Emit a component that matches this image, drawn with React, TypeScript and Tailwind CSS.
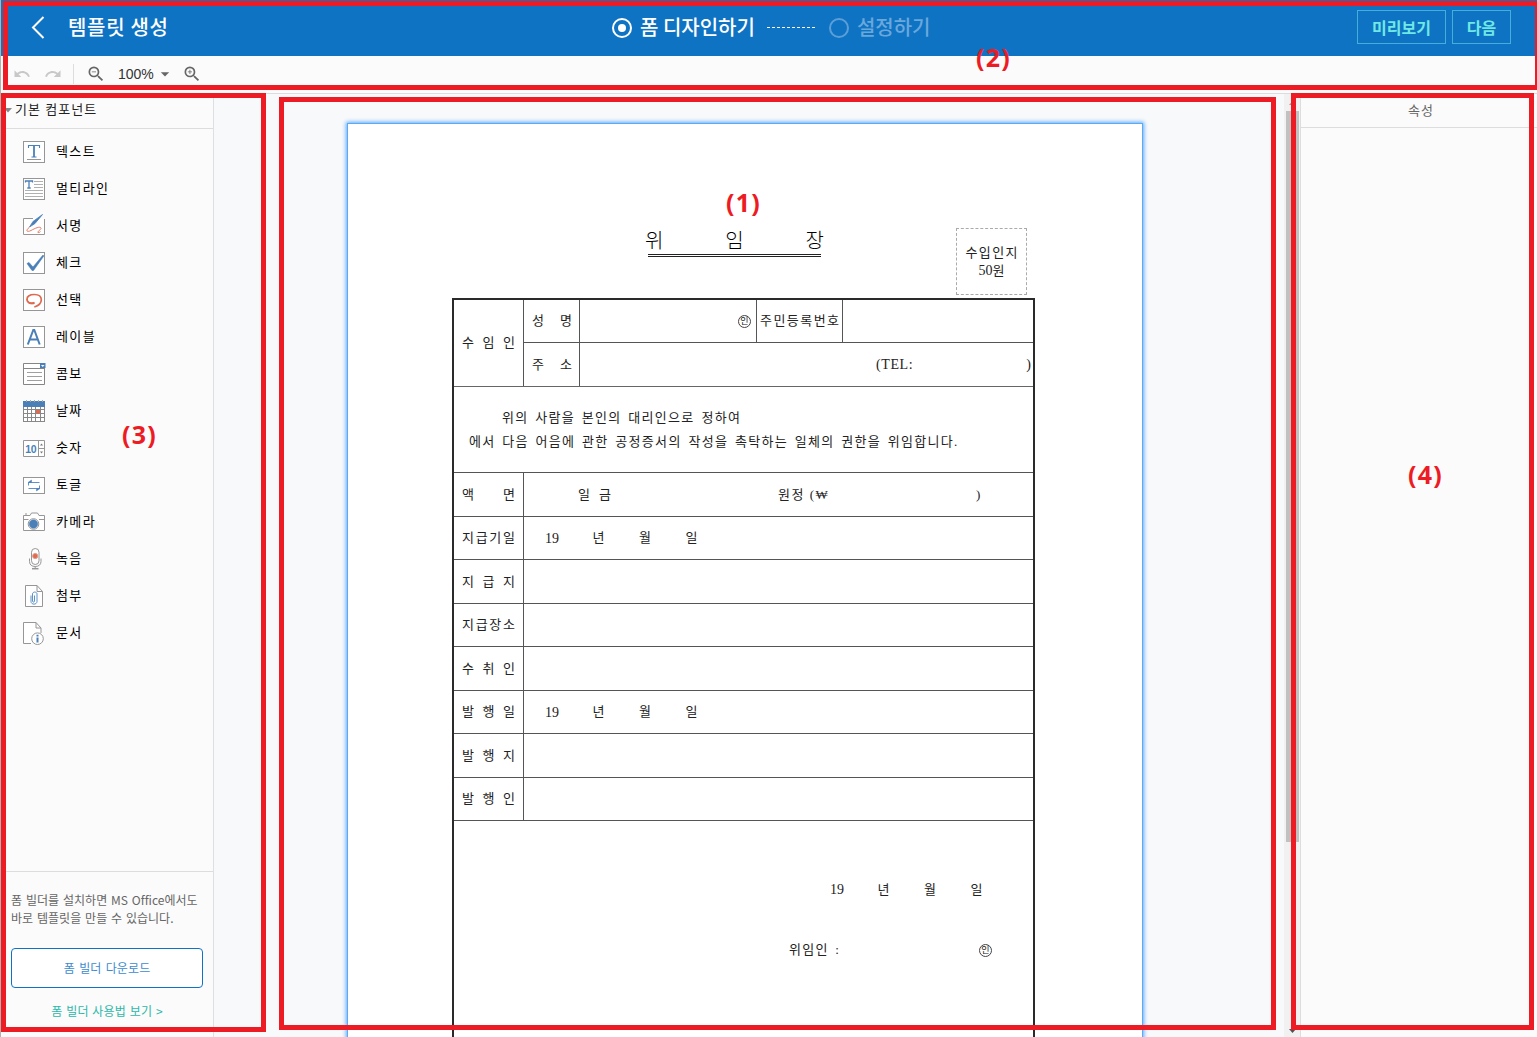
import React from "react";
import { MdArrowDropDown, MdRedo, MdUndo, MdZoomIn, MdZoomOut } from "react-icons/md";

const GRAY = "#969696";
const BLUE = "#4a7fb8";
const RED = "#dd6b52";

function Icon({ children }: { children: React.ReactNode }) {
  return (
    <svg width="24" height="24" viewBox="0 0 24 24" fill="none" stroke={GRAY} strokeWidth="1" className="shrink-0">
      {children}
    </svg>
  );
}

const frame = <rect x="1.5" y="1.5" width="21" height="21" fill="#fff" />;

const components: { label: string; icon: React.ReactNode }[] = [
  {
    label: "텍스트",
    icon: (
      <>
        {frame}
        <path d="M6.500 8V5.500h11V8M9.500 17h5" stroke={BLUE} strokeWidth="1.100" />
        <path d="M12 5v12" stroke={BLUE} strokeWidth="1.800" />
        <path d="M5 19.500h14" />
      </>
    ),
  },
  {
    label: "멀티라인",
    icon: (
      <>
        {frame}
        <path d="M3.500 5.500V4h7v1.500M7 4v7M5.300 11h3.400" stroke={BLUE} strokeWidth="1.300" />
        <path d="M12 4.500h9M12 7.500h9M12 10.500h9M3 13.500h18M3 16.500h18M3 19.500h18" stroke="#b0b0b0" />
      </>
    ),
  },
  {
    label: "서명",
    icon: (
      <>
        <path d="M11 4.500H1.500v16h21V5" fill="#fff" />
        <path d="M20.500.500 11 7.500 7.500 13 13 9.500Z" fill={BLUE} stroke={BLUE} strokeWidth=".8" />
        <path d="M7.500 13C3 17 5 18.500 9 16.500c4-2.200 9-4.500 10-2.500.7 1.500-4.500 3.800-3 4.500 1 .3 2-.5 2.500-1" stroke={RED} strokeWidth=".9" />
      </>
    ),
  },
  {
    label: "체크",
    icon: (
      <>
        {frame}
        <path d="M5 12.500 7 11.500l4 4.500L21 4l.8 1L11.500 19.500H10Z" fill={BLUE} stroke={BLUE} strokeWidth=".6" />
      </>
    ),
  },
  {
    label: "선택",
    icon: (
      <>
        {frame}
        <path
          d="M12.500 14.500C8 16.500 5 14 5 11.200 5 8 8 6.500 12.300 6.500c4.200 0 7 1.800 7 5.200 0 3.500-2.800 6-7 7.300"
          stroke={RED}
          strokeWidth="1.700"
        />
        <path d="M5 11c0 3 3 4.500 7 3.500l.3 1.200C8 17 4.500 14.500 5 11Z" fill={RED} stroke={RED} strokeWidth=".7" />
      </>
    ),
  },
  {
    label: "레이블",
    icon: (
      <>
        {frame}
        <path d="M5.800 19.500 11.300 5h1L17.700 19.500M7.800 14.500h8" stroke={BLUE} strokeWidth="2" />
      </>
    ),
  },
  {
    label: "콤보",
    icon: (
      <>
        <path d="M1.500 1.500h21v21h-21ZM1.500 6.500h21" fill="#fff" stroke="#858585" />
        <rect x="18" y="1" width="5.500" height="5" fill={BLUE} stroke="none" />
        <path d="M19 3h3.500l-1.750 2Z" fill="#fff" stroke="none" />
        <path d="M5 10.500h15M5 14.500h15M5 18.500h15" stroke="#a0a0a0" />
      </>
    ),
  },
  {
    label: "날짜",
    icon: (
      <>
        <rect x="1.500" y="6.500" width="21" height="16" fill="#fff" stroke="#888" />
        <path d="M1.500 10.500h21M1.500 14.500h21M1.500 18.500h21M5.500 8v14M9.500 8v14M13.500 8v14M18.500 8v14" stroke="#888" />
        <rect x="1" y="2" width="22" height="6" fill={BLUE} stroke="none" />
        <path d="M4.500 1v2M8.500 1v2M12.500 1v2M16.500 1v2M20.500 1v2" stroke="#aaa" />
        <rect x="14" y="11" width="4" height="3.500" fill={RED} stroke="none" />
      </>
    ),
  },
  {
    label: "숫자",
    icon: (
      <>
        <path d="M1.500 4.500h21v16h-21ZM16.500 4.500v16M16.500 12.500h6" fill="#fff" />
        <path d="M18 9.500l1.500-2 1.500 2ZM18 15.500l1.500 2 1.500-2Z" fill="#777" stroke="none" />
        <text x="3.200" y="17" fontSize="10.500" fontWeight="700" fill={BLUE} stroke="none" fontFamily="Liberation Sans, sans-serif" textLength="11.500">
          10
        </text>
      </>
    ),
  },
  {
    label: "토글",
    icon: (
      <>
        <rect x="1.500" y="4.500" width="21" height="16" fill="#fff" />
        <path d="M17.500 9.500H6.500v3M6.500 15.500h11v-3" stroke="#5d93c8" />
        <path d="M6 9.500 9.500 7v2.500ZM18 15.500 14.500 18v-2.500Z" fill={BLUE} stroke={BLUE} strokeWidth=".5" />
      </>
    ),
  },
  {
    label: "카메라",
    icon: (
      <>
        <path d="M1.500 5.500H8l1.500-2.500h6L17 5.500h5.500v15h-21ZM1.500 9.500h5M17 9.500h5.500M3 4h2" fill="#fff" />
        <circle cx="11.500" cy="14" r="5.300" fill="#fff" />
        <circle cx="11.500" cy="14" r="4.200" fill={BLUE} stroke={BLUE} strokeWidth=".6" />
      </>
    ),
  },
  {
    label: "녹음",
    icon: (
      <>
        <rect x="9.500" y="1.500" width="7.500" height="16" rx="3.750" fill="#fff" />
        <path d="M7.500 11.500v3c0 3.500 2.500 5 5.700 5s5.800-1.500 5.800-5v-3M13.200 19.500v2" />
        <path d="M10 21.700h6.500" strokeWidth="1.500" />
        <circle cx="13.200" cy="9" r="2.600" fill={RED} stroke="#e59a88" />
      </>
    ),
  },
  {
    label: "첨부",
    icon: (
      <>
        <path d="M3.500 1.500H15l5.500 6v15h-17ZM15 1.500v6h5.500" fill="#fff" />
        <path d="M12.500 11.500v5.500c0 1.500-2 1.500-2 0V10c0-2.600 4.500-2.600 4.500 0v7.500c0 3.500-6 3.500-6 0v-6" stroke="#5d93c8" />
      </>
    ),
  },
  {
    label: "문서",
    icon: (
      <>
        <path d="M9 22.500H1.500v-21H14l5 5.500v5M14 1.500v5.500h5" fill="#fff" />
        <circle cx="15.500" cy="17.700" r="5.800" fill="#fff" />
        <path d="M15.500 16.500v5M15.500 13.800v1.600" stroke={BLUE} strokeWidth="2" />
      </>
    ),
  },
];

/** Characters distributed evenly over a fixed width. */
function Spread({ text, className = "" }: { text: string; className?: string }) {
  return (
    <span className={"flex shrink-0 justify-between " + className}>
      {text.split("").map((c, i) => (
        <span key={i}>{c}</span>
      ))}
    </span>
  );
}

/** Seal mark: a small syllable inside a circle. */
function Seal() {
  return (
    <span className="flex size-[13px] shrink-0 items-center justify-center rounded-full border border-[#444] text-[9px] leading-none tracking-normal">
      <span>인</span>
    </span>
  );
}

function DateLine() {
  return (
    <>
      <span className="w-[47.500px] text-[14px]">19</span>
      <span className="w-[46.500px]">년</span>
      <span className="w-[46.500px]">월</span>
      <span>일</span>
    </>
  );
}

const rows: { label: string; kind?: "amount" | "date"; height: string }[] = [
  { label: "액면", kind: "amount", height: "h-[44px]" },
  { label: "지급기일", kind: "date", height: "h-[43px]" },
  { label: "지급지", height: "h-[44px]" },
  { label: "지급장소", height: "h-[43px]" },
  { label: "수취인", height: "h-[44px]" },
  { label: "발행일", kind: "date", height: "h-[43px]" },
  { label: "발행지", height: "h-[44px]" },
  { label: "발행인", height: "h-[43px]" },
];

function FormTable() {
  return (
    <div className="ml-[104px] h-[760px] w-[583px] border-2 border-[#2a2a2a]">
      <div className="flex h-[87px] border-b border-[#666]">
        <div className="flex w-[70px] items-center border-r border-[#555] pl-[8px]">
          <Spread text="수임인" className="w-[53px]" />
        </div>
        <div className="flex-1">
          <div className="flex h-[43px] border-b border-[#555]">
            <div className="flex w-[56px] items-center border-r border-[#555] pl-[8px]">
              <Spread text="성명" className="w-[40px]" />
            </div>
            <div className="flex w-[177px] items-center justify-end border-r border-[#555] pr-[5px]">
              <Seal />
            </div>
            <div className="flex w-[86px] items-center border-r border-[#555] pl-[3px]">
              <Spread text="주민등록번호" className="w-[79px]" />
            </div>
          </div>
          <div className="flex h-[43px]">
            <div className="flex w-[56px] items-center border-r border-[#555] pl-[8px]">
              <Spread text="주소" className="w-[40px]" />
            </div>
            <div className="flex flex-1 items-center justify-between pr-[2px] pl-[296px] text-[14px]">
              <span className="tracking-[0.6px]">(TEL:</span>
              <span>)</span>
            </div>
          </div>
        </div>
      </div>
      <div className="h-[86px] border-b border-[#555] pt-[19px] leading-[24px] tracking-[1.300px] whitespace-pre [word-spacing:2.200px]">
        <div className="pl-[48px]">위의 사람을 본인의 대리인으로 정하여</div>
        <div className="pl-[15px]">에서 다음 어음에 관한 공정증서의 작성을 촉탁하는 일체의 권한을 위임합니다.</div>
      </div>
      {rows.map((r) => (
        <div key={r.label} className={"flex border-b border-[#555] " + r.height}>
          <div className="flex w-[70px] items-center border-r border-[#555] pl-[8px]">
            <Spread text={r.label} className="w-[53px]" />
          </div>
          {r.kind === "amount" && (
            <div className="flex flex-1 items-center">
              <Spread text="일금" className="ml-[54px] w-[33px]" />
              <span className="ml-[167px] w-[198px] tracking-[1.500px] whitespace-pre">원정 (₩</span>
              <span>)</span>
            </div>
          )}
          {r.kind === "date" && (
            <div className="flex flex-1 items-center pl-[21px]">
              <DateLine />
            </div>
          )}
        </div>
      ))}
      <div className="flex h-[18px] pt-[60px] pl-[376px] leading-[18px]">
        <DateLine />
      </div>
      <div className="flex items-center pt-[60px] pl-[335px] leading-[18px]">
        <span className="w-[190px] tracking-[1.300px] whitespace-pre [word-spacing:2px]">위임인 :</span>
        <Seal />
      </div>
    </div>
  );
}

function Paper() {
  return (
    <div className="mt-[29px] ml-[133px] h-[1000px] w-[796px] shrink-0 border border-[#5aaafa] bg-white font-['Liberation_Serif','Noto_Sans_CJK_KR',serif] text-[13px] text-[#222] shadow-[0_0_4px_1px_#5aaafa]">
      <div className="flex h-[174px] pl-[297px]">
        <div className="mt-[104px] w-[179px]">
          <Spread text="위임장" className="h-[26px] text-[20px] leading-[26px] font-light text-black" />
          <div className="ml-[3px] w-[173px] border-t-[3px] border-double border-[#222]" />
        </div>
        <div className="mt-[104px] ml-[132px] flex h-[67px] w-[71px] flex-col items-center border border-dashed border-[#aaa] pt-[15px] leading-[18px]">
          <Spread text="수입인지" className="w-[52px]" />
          <span>
            <span className="text-[14px]">50</span>원
          </span>
        </div>
      </div>
      <FormTable />
    </div>
  );
}

function Header() {
  return (
    <header className="flex h-[56px] shrink-0 bg-[#0f73c4] text-[20px] font-medium text-white">
      <div className="flex w-[611px] items-center pb-[2px] pl-[28px]">
        <svg width="16" height="24" viewBox="0 0 16 24" fill="none" stroke="#fff" strokeWidth="2">
          <path d="M14.500 2 4 12.500 14.500 23" />
        </svg>
        <span className="ml-[23px] tracking-[0.7px]">템플릿 생성</span>
      </div>
      <div className="flex flex-1 items-center">
        <span className="flex size-[20px] items-center justify-center rounded-full border-2 border-white">
          <span className="size-[8px] rounded-full bg-white" />
        </span>
        <span className="ml-[8px] pb-[2px]">폼 디자인하기</span>
        <svg width="51" height="2" className="mb-px ml-[12px]">
          <path d="M0 .500h50" stroke="#fff" strokeWidth="1" strokeDasharray="3 2" shapeRendering="crispEdges" />
        </svg>
        <span className="ml-[11px] size-[20px] rounded-full border-2 border-[#5c9fd8]" />
        <span className="ml-[8px] pb-[2px] text-[#6aa8dc]">설정하기</span>
      </div>
      <div className="flex gap-[6px] pt-[10px] pr-[26px] text-[16px] font-bold text-[#6fe8e4]">
        <button className="h-[34px] w-[89px] border border-[#45aedb]">미리보기</button>
        <button className="h-[34px] w-[59px] border border-[#45aedb]">다음</button>
      </div>
    </header>
  );
}

function Toolbar() {
  return (
    <div className="flex h-[38px] shrink-0 items-center border-b border-[#dcdcdc] bg-[#fbfbfb] pb-px pl-[12px] text-[#666]">
      <MdUndo size={18} color="#c8c8c8" />
      <MdRedo size={18} color="#c8c8c8" className="ml-[13px]" />
      <span className="ml-[11px] h-[20px] w-px bg-[#ddd]" />
      <MdZoomOut size={20} className="ml-[12px]" />
      <span className="ml-[12px] font-['Liberation_Sans',sans-serif] text-[14px] text-[#333]">100%</span>
      <MdArrowDropDown size={20} className="ml-[1px]" />
      <MdZoomIn size={20} className="ml-[7px]" />
    </div>
  );
}

function Sidebar() {
  return (
    <aside className="flex w-[213px] shrink-0 flex-col border-r border-[#dde0e3] bg-[#fbfbfb]">
      <div className="flex h-[35px] shrink-0 items-center border-b border-[#ddd] pb-[4px] pl-[3px] text-[13px] tracking-[1.1px] text-[#222]">
        <svg width="8" height="5" viewBox="0 0 8 5" className="mt-[2px]">
          <path d="M0 0h8L4 4.500Z" fill="#888" />
        </svg>
        <span className="ml-[3px]">기본 컴포넌트</span>
      </div>
      <ul className="flex-1 pt-[5px]">
        {components.map((c) => (
          <li key={c.label} className="flex h-[37px] items-start pt-[6px] pl-[21px]">
            <Icon>{c.icon}</Icon>
            <span className="ml-[10px] text-[13px] leading-[21px] tracking-[1.4px] text-black">{c.label}</span>
          </li>
        ))}
      </ul>
      <div className="h-[166px] shrink-0 border-t border-[#ddd] pt-[19px] pr-[10px] pl-[10px] text-[12px]">
        <p className="leading-[18px] tracking-[0.03px] whitespace-pre text-[#666] [word-spacing:1.100px]">
          {"폼 빌더를 설치하면 MS Office에서도\n바로 템플릿을 만들 수 있습니다."}
        </p>
        <button className="mt-[21px] h-[40px] w-[192px] rounded-[4px] border border-[#0f73c4] bg-white tracking-[0.1px] text-[#3b8bd0] [word-spacing:1.5px]">
          폼 빌더 다운로드
        </button>
        <a className="mt-[14px] block text-center leading-[18px] tracking-[0.2px] text-[#2cb8aa] [word-spacing:.8px]">폼 빌더 사용법 보기 &gt;</a>
      </div>
    </aside>
  );
}

function ScrollBar() {
  return (
    <div className="flex w-[16px] shrink-0 flex-col items-center bg-[#f1f1f1]">
      <div className="flex h-[17px] items-center">
        <svg width="7" height="4">
          <path d="M0 4 3.500 0 7 4Z" fill="#999" />
        </svg>
      </div>
      <div className="ml-px h-[731px] w-[13px] bg-[#c1c1c1]" />
      <svg width="7" height="4" className="mt-[187px]">
        <path d="M0 0h7L3.500 4Z" fill="#505050" />
      </svg>
    </div>
  );
}

function Annotations() {
  return (
    <div className="pointer-events-none absolute inset-0 font-['Noto_Sans',sans-serif] text-[25px] leading-[30px] font-bold tracking-[1.200px] text-[#ed1c24]">
      <div className="absolute top-px left-[3px] h-[89px] w-[1537px] border-[5px] border-[#ed1c24]" />
      <div className="absolute top-[93px] left-px h-[939px] w-[265px] border-[5px] border-[#ed1c24]" />
      <div className="absolute top-[97px] left-[279px] h-[933px] w-[997px] border-[5px] border-[#ed1c24]" />
      <div className="absolute top-[93px] left-[1291px] h-[937px] w-[243px] border-[5px] border-[#ed1c24]" />
      <span className="absolute top-[187px] left-[726px]">(1)</span>
      <span className="absolute top-[42px] left-[976px]">(2)</span>
      <span className="absolute top-[419px] left-[122px]">(3)</span>
      <span className="absolute top-[459px] left-[1408px]">(4)</span>
    </div>
  );
}

export default function App() {
  return (
    <div className="relative flex h-[1037px] w-[1537px] flex-col overflow-hidden border-l border-[#b5b0ac] bg-white font-['Noto_Sans_CJK_KR',sans-serif]">
      <Header />
      <Toolbar />
      <div className="flex min-h-0 flex-1">
        <Sidebar />
        <main className="flex min-w-0 flex-1 items-start overflow-hidden bg-[#f8f9fb]">
          <Paper />
        </main>
        <ScrollBar />
        <aside className="w-[237px] shrink-0 border-l border-[#ddd] bg-[#fbfbfb]">
          <div className="h-[34px] border-b border-[#ddd] pl-[4px] text-center text-[13px] leading-[32px] tracking-[1px] text-[#666]">속성</div>
        </aside>
      </div>
      <div className="absolute inset-y-0 -left-px w-[1537px]">
        <Annotations />
      </div>
    </div>
  );
}
